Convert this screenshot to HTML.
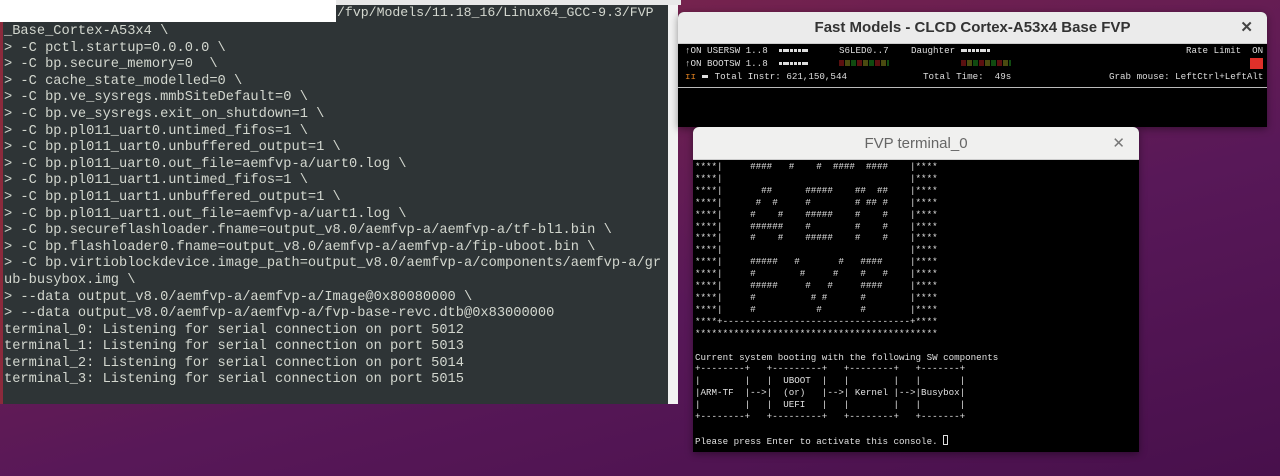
<!DOCTYPE html>
<html><head><meta charset="utf-8"><style>
*{margin:0;padding:0;box-sizing:border-box}
body{width:1280px;height:476px;overflow:hidden;position:relative;font-family:"Liberation Sans",sans-serif;
background:linear-gradient(165deg,#8a2c48 0%,#6e2050 30%,#581858 60%,#48104c 100%);}
.term{position:absolute;left:0;top:0;width:678px;height:404px;background:#2e3436;border-left:3px solid #8b2a3c;}
.term .topw{position:absolute;left:0;top:0;width:678px;height:5px;background:#e8e8e8}
.term .wbox{position:absolute;left:-3px;top:0;width:336px;height:22px;background:#fff}
.term pre{position:absolute;font-family:"Liberation Mono",monospace;font-size:13.7px;line-height:16.6px;color:#d3d7cf;white-space:pre}
.term .sb{position:absolute;left:665px;top:5px;width:10px;height:399px;background:#f2f2f2}
.fm{position:absolute;left:678px;top:12px;width:589px;height:115px;background:#000;border-radius:6px 6px 0 0;overflow:hidden;box-shadow:0 2px 8px rgba(0,0,0,.4)}
.tb{position:absolute;left:0;top:0;width:100%;height:32px;background:#ebebeb;color:#333;font-weight:bold;font-size:15px;text-align:center;line-height:31px;border-bottom:1px solid #ccc}
.tb .x{position:absolute;right:14px;top:0;font-size:15px;color:#444}
.fm .r{position:absolute;font-family:"Liberation Mono",monospace;font-size:9.2px;color:#ddd;white-space:pre}
.sq{display:inline-block;width:3px;height:3px;background:#ddd;margin-right:0.8px;vertical-align:middle}
.ft{position:absolute;left:693px;top:127px;width:446px;height:325px;background:#000;border-radius:6px 6px 0 0;overflow:hidden;box-shadow:0 2px 8px rgba(0,0,0,.4)}
.ft .tb{height:33px;font-weight:normal;color:#666;font-size:15px;line-height:33px;background:#f0f0ef}
.ft pre{position:absolute;left:2px;top:34px;font-family:"Liberation Mono",monospace;font-size:9.2px;line-height:11.9px;color:#e0e0e0;white-space:pre}
</style></head><body>
<div class="term">
<div class="topw"></div><div class="wbox"></div>
<pre style="left:334px;top:5px;font-size:13.2px">/fvp/Models/11.18_16/Linux64_GCC-9.3/FVP</pre>
<pre style="left:1px;top:24px">_Base_Cortex-A53x4 \
&gt; -C pctl.startup=0.0.0.0 \
&gt; -C bp.secure_memory=0  \
&gt; -C cache_state_modelled=0 \
&gt; -C bp.ve_sysregs.mmbSiteDefault=0 \
&gt; -C bp.ve_sysregs.exit_on_shutdown=1 \
&gt; -C bp.pl011_uart0.untimed_fifos=1 \
&gt; -C bp.pl011_uart0.unbuffered_output=1 \
&gt; -C bp.pl011_uart0.out_file=aemfvp-a/uart0.log \
&gt; -C bp.pl011_uart1.untimed_fifos=1 \
&gt; -C bp.pl011_uart1.unbuffered_output=1 \
&gt; -C bp.pl011_uart1.out_file=aemfvp-a/uart1.log \
&gt; -C bp.secureflashloader.fname=output_v8.0/aemfvp-a/aemfvp-a/tf-bl1.bin \
&gt; -C bp.flashloader0.fname=output_v8.0/aemfvp-a/aemfvp-a/fip-uboot.bin \
&gt; -C bp.virtioblockdevice.image_path=output_v8.0/aemfvp-a/components/aemfvp-a/gr
ub-busybox.img \
&gt; --data output_v8.0/aemfvp-a/aemfvp-a/Image@0x80080000 \
&gt; --data output_v8.0/aemfvp-a/aemfvp-a/fvp-base-revc.dtb@0x83000000
terminal_0: Listening for serial connection on port 5012
terminal_1: Listening for serial connection on port 5013
terminal_2: Listening for serial connection on port 5014
terminal_3: Listening for serial connection on port 5015</pre>
<div class="sb"></div>
</div>

<div class="fm">
<div class="tb">Fast Models - CLCD Cortex-A53x4 Base FVP<span class="x">✕</span></div>
<div class="r" style="left:7px;top:33px">↑ON USERSW 1..8  <span class="sq"></span><span class="sq"></span><span class="sq"></span><span class="sq"></span><span class="sq"></span><span class="sq"></span><span class="sq"></span><span class="sq"></span></div>
<div class="r" style="left:161px;top:33px">S6LED0..7</div>
<div class="r" style="left:233px;top:33px">Daughter <span class="sq"></span><span class="sq"></span><span class="sq"></span><span class="sq"></span><span class="sq"></span><span class="sq"></span><span class="sq"></span><span class="sq"></span></div>
<div class="r" style="left:508px;top:33px">Rate Limit  ON</div>
<div class="r" style="left:7px;top:46px">↑ON BOOTSW 1..8  <span class="sq"></span><span class="sq"></span><span class="sq"></span><span class="sq"></span><span class="sq"></span><span class="sq"></span><span class="sq"></span><span class="sq"></span></div>
<div style="position:absolute;left:161px;top:48px;width:50px;height:6px;background:repeating-linear-gradient(90deg,#5a1010 0 5px,#000 5px 6px,#4a4a10 6px 11px,#000 11px 12px,#104a10 12px 17px,#000 17px 18px)"></div>
<div style="position:absolute;left:283px;top:48px;width:50px;height:6px;background:repeating-linear-gradient(90deg,#5a1010 0 5px,#000 5px 6px,#4a4a10 6px 11px,#000 11px 12px,#104a10 12px 17px,#000 17px 18px)"></div>
<div style="position:absolute;left:572px;top:46px;width:13px;height:11px;background:#e0302a"></div>
<div class="r" style="left:7px;top:59px"><span style="color:#e08020">ɪɪ</span> <span class="sq"></span><span class="sq"></span> Total Instr: 621,150,544</div>
<div class="r" style="left:245px;top:59px">Total Time:  49s</div>
<div class="r" style="left:431px;top:59px">Grab mouse: LeftCtrl+LeftAlt</div>
<div style="position:absolute;left:0;top:75px;width:100%;height:1px;background:#bbb"></div>
</div>

<div class="ft">
<div class="tb">FVP terminal_0<span class="x" style="color:#777">✕</span></div>
<pre>****|     ####   #    #  ####  ####    |****
****|                                  |****
****|       ##      #####    ##  ##    |****
****|      #  #     #        # ## #    |****
****|     #    #    #####    #    #    |****
****|     ######    #        #    #    |****
****|     #    #    #####    #    #    |****
****|                                  |****
****|     #####   #       #   ####     |****
****|     #        #     #    #   #    |****
****|     #####     #   #     ####     |****
****|     #          # #      #        |****
****|     #           #       #        |****
****+----------------------------------+****
********************************************

Current system booting with the following SW components
+--------+   +---------+   +--------+   +-------+
|        |   |  UBOOT  |   |        |   |       |
|ARM-TF  |--&gt;|  (or)   |--&gt;| Kernel |--&gt;|Busybox|
|        |   |  UEFI   |   |        |   |       |
+--------+   +---------+   +--------+   +-------+

Please press Enter to activate this console. <span style="display:inline-block;width:5px;height:10px;border:1px solid #ddd;vertical-align:-1px"></span></pre>
</div>
</body></html>
